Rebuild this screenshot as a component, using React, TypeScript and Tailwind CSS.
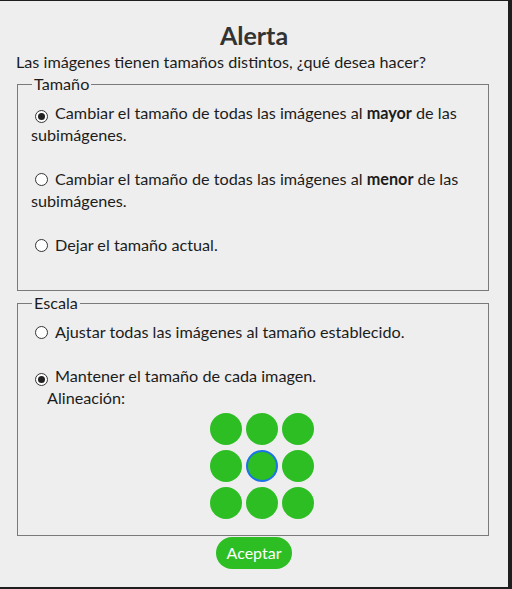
import { useState } from 'react'

type RadioProps = { checked: boolean; onClick?: () => void }

function Radio({ checked, onClick }: RadioProps) {
  return (
    <span
      onClick={onClick}
      className="inline-flex items-center justify-center w-[13px] h-[13px] ml-[4px] mr-[7px] rounded-full border border-[#333] bg-white align-[-1px] cursor-pointer"
    >
      {checked && <span className="block w-[7px] h-[7px] rounded-full bg-[#222]" />}
    </span>
  )
}

export default function App() {
  const [size, setSize] = useState(0)
  const [scale, setScale] = useState(1)
  const [align, setAlign] = useState(4)

  return (
    <div className="w-[512px] h-[589px] bg-[#1e1e1e] pt-[1px]">
      <div
        className="w-[508px] h-[586px] bg-[#eeeeee] text-[#1c1c1c] text-[16.2px] leading-[22px]"
        style={{ fontFamily: 'Lato, "Open Sans", sans-serif' }}
      >
        <h1 className="pt-[19px] text-center text-[25px] leading-[30px] font-bold text-[#333]">Alerta</h1>
        <p className="pl-[16px] mt-[1px]">Las imágenes tienen tamaños distintos, ¿qué desea hacer?</p>

        {/* tamaño */}
        <fieldset className="ml-[17px] w-[472px] border border-[#7a7a7a] px-[13px] pt-[7px] pb-[34px]">
          <legend className="px-[2px] ml-[1px]">Tamaño</legend>
          <div>
            <Radio checked={size === 0} onClick={() => setSize(0)} />
            Cambiar el tamaño de todas las imágenes al <b>mayor</b> de las subimágenes.
          </div>
          <div className="mt-[22px]">
            <Radio checked={size === 1} onClick={() => setSize(1)} />
            Cambiar el tamaño de todas las imágenes al <b>menor</b> de las subimágenes.
          </div>
          <div className="mt-[22px]">
            <Radio checked={size === 2} onClick={() => setSize(2)} />
            Dejar el tamaño actual.
          </div>
        </fieldset>

        {/* escala */}
        <fieldset className="ml-[17px] mt-[1px] w-[472px] border border-[#7a7a7a] px-[13px] pt-[7px] pb-[16px]">
          <legend className="px-[2px] ml-[1px]">Escala</legend>
          <div>
            <Radio checked={scale === 0} onClick={() => setScale(0)} />
            Ajustar todas las imágenes al tamaño establecido.
          </div>
          <div className="mt-[22px]">
            <Radio checked={scale === 1} onClick={() => setScale(1)} />
            Mantener el tamaño de cada imagen.
          </div>
          <div className="pl-[16px]">Alineación:</div>
          <div className="grid grid-cols-[repeat(3,32px)] gap-x-[4px] gap-y-[5px] ml-[179px] mt-[4px]">
            {Array.from({ length: 9 }).map((_, i) => (
              <button
                key={i}
                onClick={() => setAlign(i)}
                className={
                  'w-[32px] h-[32px] rounded-full bg-[#2dbe24] ' +
                  (align === i ? 'border-2 border-[#1a73e8]' : 'border-0')
                }
              />
            ))}
          </div>
        </fieldset>

        <div className="flex justify-center mt-[1px]">
          <button className="h-[32px] px-[11px] rounded-full bg-[#2dbe24] text-white text-[16px]">
            Aceptar
          </button>
        </div>
      </div>
    </div>
  )
}
